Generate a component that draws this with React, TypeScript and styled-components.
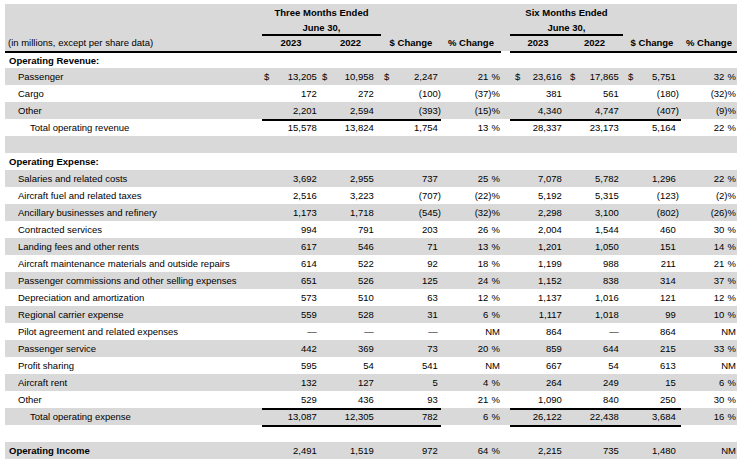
import React from 'react';
import styled, { createGlobalStyle, css } from 'styled-components';

const GlobalStyle = createGlobalStyle`
  html, body { margin: 0; padding: 0; background: #ffffff; }
  body {
    font-family: 'Liberation Sans', Arial, Helvetica, sans-serif;
    color: #000000;
    -webkit-font-smoothing: antialiased;
  }
`;

const GRAY = '#d9d9d9';
const COLS =
  '257px 14px 44px 13px 48px 14px 46px 60px 9px 13px 43px 13px 44px 13px 45px 56px';

const Page = styled.div`
  padding: 4px 5px 0 5px;
  width: 732px;
`;

const Header = styled.div`
  background: ${GRAY};
`;

const GridRow = styled.div<{ $h: number; $shade?: boolean }>`
  display: grid;
  grid-template-columns: ${COLS};
  height: ${(p) => p.$h}px;
  background: ${(p) => (p.$shade ? GRAY : 'transparent')};
  font-size: 9.5px;
  line-height: ${(p) => p.$h}px;
`;

const HeadCell = styled.div<{ $from: number; $to: number; $rule?: boolean }>`
  grid-column: ${(p) => p.$from} / ${(p) => p.$to};
  box-sizing: border-box;
  text-align: center;
  font-weight: bold;
  white-space: nowrap;
  ${(p) =>
    p.$rule &&
    css`
      border-bottom: 2px solid #000;
      line-height: 12px;
      padding-top: 1px;
    `}
`;

const UnitsCell = styled.div`
  grid-column: 1 / 2;
  padding-left: 3px;
  white-space: nowrap;
`;

const ThickRule = styled.div<{ $from: number; $to: number }>`
  grid-column: ${(p) => p.$from} / ${(p) => p.$to};
  background: #000;
`;

const Label = styled.div<{ $level: number; $bold?: boolean }>`
  grid-column: 1 / 2;
  padding-left: ${(p) => (p.$level === 0 ? 4 : p.$level === 1 ? 13 : 25)}px;
  font-weight: ${(p) => (p.$bold ? 'bold' : 'normal')};
  white-space: nowrap;
`;

const Cell = styled.div<{ $rule?: boolean }>`
  box-sizing: border-box;
  white-space: nowrap;
  ${(p) =>
    p.$rule &&
    css`
      border-bottom: 2px solid #000;
    `}
`;

const Dollar = styled(Cell)<{ $pl: number }>`
  padding-left: ${(p) => p.$pl}px;
  text-align: left;
`;

const Value = styled(Cell)<{ $pr: number }>`
  padding-right: ${(p) => p.$pr}px;
  text-align: right;
`;

const Paren = styled.span`
  display: inline-block;
  width: 3.2px;
  text-align: left;
`;

const Pct = styled(Cell)<{ $pr: number }>`
  padding-right: ${(p) => p.$pr}px;
  text-align: right;
`;

const Spacer = styled.div``;

type RowData = {
  label: string;
  level: 0 | 1 | 2;
  bold?: boolean;
  dollar?: boolean;
  v?: string[];
  p?: [string, string];
  rule?: boolean;
  blank?: boolean;
};

const DOLLAR_PAD = [2, 2, 3, 5, 4, 5];
const VALUE_PAD = [0, 4, 0, 1, 1, 2];
const PCT_PAD = [1, 1];

const rows: RowData[] = [
  { label: 'Operating Revenue:', level: 0, bold: true },
  { label: 'Passenger', level: 1, dollar: true, v: ['13,205', '10,958', '2,247', '23,616', '17,865', '5,751'], p: ['21', '32'] },
  { label: 'Cargo', level: 1, v: ['172', '272', '(100)', '381', '561', '(180)'], p: ['(37)', '(32)'] },
  { label: 'Other', level: 1, v: ['2,201', '2,594', '(393)', '4,340', '4,747', '(407)'], p: ['(15)', '(9)'], rule: true },
  { label: 'Total operating revenue', level: 2, v: ['15,578', '13,824', '1,754', '28,337', '23,173', '5,164'], p: ['13', '22'] },
  { label: '', level: 0, blank: true },
  { label: 'Operating Expense:', level: 0, bold: true },
  { label: 'Salaries and related costs', level: 1, v: ['3,692', '2,955', '737', '7,078', '5,782', '1,296'], p: ['25', '22'] },
  { label: 'Aircraft fuel and related taxes', level: 1, v: ['2,516', '3,223', '(707)', '5,192', '5,315', '(123)'], p: ['(22)', '(2)'] },
  { label: 'Ancillary businesses and refinery', level: 1, v: ['1,173', '1,718', '(545)', '2,298', '3,100', '(802)'], p: ['(32)', '(26)'] },
  { label: 'Contracted services', level: 1, v: ['994', '791', '203', '2,004', '1,544', '460'], p: ['26', '30'] },
  { label: 'Landing fees and other rents', level: 1, v: ['617', '546', '71', '1,201', '1,050', '151'], p: ['13', '14'] },
  { label: 'Aircraft maintenance materials and outside repairs', level: 1, v: ['614', '522', '92', '1,199', '988', '211'], p: ['18', '21'] },
  { label: 'Passenger commissions and other selling expenses', level: 1, v: ['651', '526', '125', '1,152', '838', '314'], p: ['24', '37'] },
  { label: 'Depreciation and amortization', level: 1, v: ['573', '510', '63', '1,137', '1,016', '121'], p: ['12', '12'] },
  { label: 'Regional carrier expense', level: 1, v: ['559', '528', '31', '1,117', '1,018', '99'], p: ['6', '10'] },
  { label: 'Pilot agreement and related expenses', level: 1, v: ['—', '—', '—', '864', '—', '864'], p: ['NM', 'NM'] },
  { label: 'Passenger service', level: 1, v: ['442', '369', '73', '859', '644', '215'], p: ['20', '33'] },
  { label: 'Profit sharing', level: 1, v: ['595', '54', '541', '667', '54', '613'], p: ['NM', 'NM'] },
  { label: 'Aircraft rent', level: 1, v: ['132', '127', '5', '264', '249', '15'], p: ['4', '6'] },
  { label: 'Other', level: 1, v: ['529', '436', '93', '1,090', '840', '250'], p: ['21', '30'], rule: true },
  { label: 'Total operating expense', level: 2, v: ['13,087', '12,305', '782', '26,122', '22,438', '3,684'], p: ['6', '16'], rule: true },
  { label: '', level: 0, blank: true },
  { label: 'Operating Income', level: 0, bold: true, v: ['2,491', '1,519', '972', '2,215', '735', '1,480'], p: ['64', 'NM'] },
];

function renderValue(s: string) {
  if (s.startsWith('(') && s.endsWith(')')) {
    return (
      <>
        {s.slice(0, -1)}
        <Paren>)</Paren>
      </>
    );
  }
  return (
    <>
      {s}
      <Paren />
    </>
  );
}

function renderPct(s: string) {
  if (s === 'NM') return <>NM</>;
  if (s.startsWith('(')) {
    return (
      <>
        {s.slice(0, -1)}
        <Paren>)</Paren>%
      </>
    );
  }
  return (
    <>
      {s}
      <Paren />%
    </>
  );
}

function DataRow({ row, shade }: { row: RowData; shade: boolean }) {
  const cells: React.ReactNode[] = [];
  cells.push(
    <Label key="l" $level={row.level} $bold={row.bold}>
      {row.label}
    </Label>
  );
  for (let i = 0; i < 6; i++) {
    const v = row.v ? row.v[i] : '';
    cells.push(
      <Dollar key={`d${i}`} $pl={DOLLAR_PAD[i]} $rule={row.rule}>
        {row.dollar ? '$' : ''}
      </Dollar>
    );
    cells.push(
      <Value key={`v${i}`} $pr={VALUE_PAD[i]} $rule={row.rule}>
        {v ? renderValue(v) : ''}
      </Value>
    );
    if (i === 2 || i === 5) {
      const k = i === 2 ? 0 : 1;
      cells.push(
        <Pct key={`p${k}`} $pr={PCT_PAD[k]}>
          {row.p ? renderPct(row.p[k]) : ''}
        </Pct>
      );
      if (i === 2) cells.push(<Spacer key="gap" />);
    }
  }
  return (
    <GridRow $h={17} $shade={shade}>
      {cells}
    </GridRow>
  );
}

export default function App() {
  return (
    <>
      <GlobalStyle />
      <Page>
        <Header>
          <GridRow $h={17}>
            <HeadCell $from={2} $to={6}>Three Months Ended</HeadCell>
            <HeadCell $from={10} $to={14}>Six Months Ended</HeadCell>
          </GridRow>
          <GridRow $h={14}>
            <HeadCell $from={2} $to={6} $rule>
              June 30,
            </HeadCell>
            <HeadCell $from={10} $to={14} $rule>
              June 30,
            </HeadCell>
          </GridRow>
          <GridRow $h={16}>
            <UnitsCell>(in millions, except per share data)</UnitsCell>
            <HeadCell $from={2} $to={4}>2023</HeadCell>
            <HeadCell $from={4} $to={6}>2022</HeadCell>
            <HeadCell $from={6} $to={8}>$ Change</HeadCell>
            <HeadCell $from={8} $to={9}>% Change</HeadCell>
            <HeadCell $from={10} $to={12}>2023</HeadCell>
            <HeadCell $from={12} $to={14}>2022</HeadCell>
            <HeadCell $from={14} $to={16}>$ Change</HeadCell>
            <HeadCell $from={16} $to={17}>% Change</HeadCell>
          </GridRow>
        </Header>
        <GridRow $h={2}>
          <ThickRule $from={1} $to={9} />
          <ThickRule $from={10} $to={17} />
        </GridRow>
        {rows.map((r, i) =>
          i === 0 ? (
            <GridRow key={i} $h={15}>
              <Label $level={0} $bold>
                {r.label}
              </Label>
            </GridRow>
          ) : (
            <DataRow key={i} row={r} shade={i % 2 === 1} />
          )
        )}
      </Page>
    </>
  );
}
